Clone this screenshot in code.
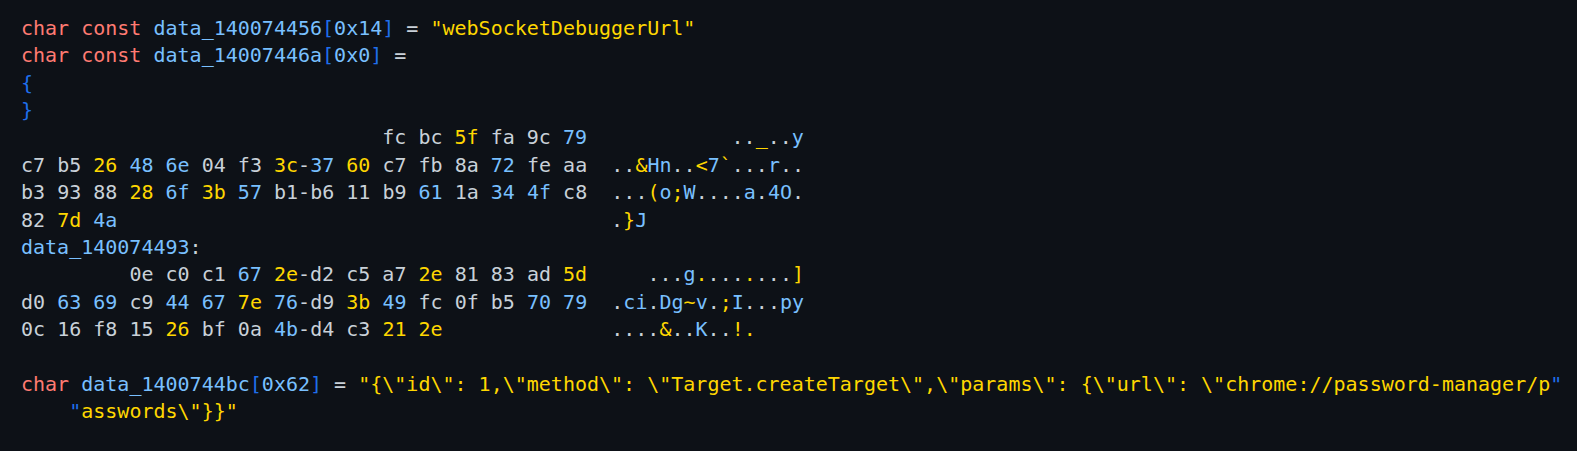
const KW = 'text-[#ff7b72]';
const ID = 'text-[#79c0ff]';
const BR = 'text-[#1f6feb]';
const STR = 'text-[#ffd700]';
const TXT = 'text-[#c9d1d9]';

function byteColor(b) {
  const isAlnum =
    (b >= 0x30 && b <= 0x39) || (b >= 0x41 && b <= 0x5a) || (b >= 0x61 && b <= 0x7a);
  if (isAlnum) return ID;
  if (b >= 0x20 && b <= 0x7e) return STR;
  return TXT;
}

// one 16-byte row: hex column, then ascii column at col 49
function HexRow({ start, bytes }) {
  const used = start * 3 + bytes.length * 3 - 1;
  return (
    <div>
      <span>{' '.repeat(start * 3)}</span>
      {bytes.map((h, i) => {
        const b = parseInt(h, 16);
        return (
          <span key={'h' + i}>
            {i > 0 && <span className={TXT}>{start + i === 8 ? '-' : ' '}</span>}
            <span className={byteColor(b)}>{h}</span>
          </span>
        );
      })}
      <span>{' '.repeat(49 - used + start)}</span>
      {bytes.map((h, i) => {
        const b = parseInt(h, 16);
        const ch = b >= 0x20 && b <= 0x7e ? String.fromCharCode(b) : '.';
        return (
          <span key={'a' + i} className={byteColor(b)}>
            {ch}
          </span>
        );
      })}
    </div>
  );
}

export default function App() {
  return (
    <div className="min-h-screen w-full bg-[#0d1117] pt-[15px] pl-[21px] text-[20px] leading-[27.36px] font-['DejaVu_Sans_Mono',monospace] text-[#c9d1d9] whitespace-pre">
      <div>
        <span className={KW}>char const</span> <span className={ID}>data_140074456</span>
        <span className={BR}>[</span><span className={ID}>0x14</span><span className={BR}>]</span>
        <span className={TXT}> = </span>
        <span className={STR}>"webSocketDebuggerUrl"</span>
      </div>
      <div>
        <span className={KW}>char const</span> <span className={ID}>data_14007446a</span>
        <span className={BR}>[</span><span className={ID}>0x0</span><span className={BR}>]</span>
        <span className={TXT}> =</span>
      </div>
      <div className={BR}>{'{'}</div>
      <div className={BR}>{'}'}</div>
      <HexRow start={10} bytes={['fc', 'bc', '5f', 'fa', '9c', '79']} />
      <HexRow start={0} bytes={['c7', 'b5', '26', '48', '6e', '04', 'f3', '3c', '37', '60', 'c7', 'fb', '8a', '72', 'fe', 'aa']} />
      <HexRow start={0} bytes={['b3', '93', '88', '28', '6f', '3b', '57', 'b1', 'b6', '11', 'b9', '61', '1a', '34', '4f', 'c8']} />
      <HexRow start={0} bytes={['82', '7d', '4a']} />
      <div>
        <span className={ID}>data_140074493</span><span className={TXT}>:</span>
      </div>
      <HexRow start={3} bytes={['0e', 'c0', 'c1', '67', '2e', 'd2', 'c5', 'a7', '2e', '81', '83', 'ad', '5d']} />
      <HexRow start={0} bytes={['d0', '63', '69', 'c9', '44', '67', '7e', '76', 'd9', '3b', '49', 'fc', '0f', 'b5', '70', '79']} />
      <HexRow start={0} bytes={['0c', '16', 'f8', '15', '26', 'bf', '0a', '4b', 'd4', 'c3', '21', '2e']} />
      <div>{' '}</div>
      <div>
        <span className={KW}>char</span> <span className={ID}>data_1400744bc</span>
        <span className={BR}>[</span><span className={ID}>0x62</span><span className={BR}>]</span>
        <span className={TXT}> = </span>
        <span className={STR}>
          {'"{\\"id\\": 1,\\"method\\": \\"Target.createTarget\\",\\"params\\": {\\"url\\": \\"chrome://password-manager/p'}
        </span>
        <span className={BR}>"</span>
      </div>
      <div>
        {'    '}
        <span className={BR}>"</span>
        <span className={STR}>{'asswords\\"}}"'}</span>
      </div>
    </div>
  );
}
